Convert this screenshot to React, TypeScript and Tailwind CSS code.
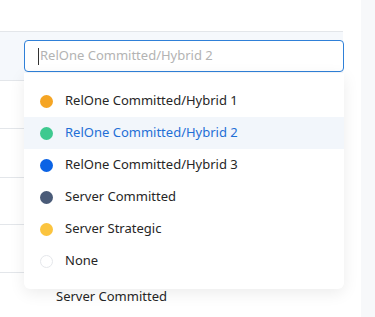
import React from 'react';

const options = [
  { label: 'RelOne Committed/Hybrid 1', color: 'bg-[#f5a524]' },
  { label: 'RelOne Committed/Hybrid 2', color: 'bg-[#3ec98f]', active: true },
  { label: 'RelOne Committed/Hybrid 3', color: 'bg-[#0b63e5]' },
  { label: 'Server Committed', color: 'bg-[#4a5b78]' },
  { label: 'Server Strategic', color: 'bg-[#fbc43f]' },
  { label: 'None', color: 'bg-white border border-[#e5e7eb]' },
];

export default function App() {
  return (
    <div className="relative flex h-[317px] w-[375px] overflow-hidden bg-white font-['Noto_Sans',sans-serif] text-[13px] text-[#262626]">
      {/* table */}
      <div className="w-[343px] pt-[31px]">
        <div className="border-t border-[#e3e6ea]">
          <div className="h-[49px] border-b border-[#e3e6ea] bg-[#f5f8fc]" />
          <div className="h-[48px] border-b border-[#e3e6ea]" />
          <div className="h-[49px] border-b border-[#e3e6ea]" />
          <div className="h-[47px] border-b border-[#e3e6ea]" />
          <div className="h-[48px] border-b border-[#e3e6ea]" />
          <div className="flex h-[48px] items-center pl-[56px]">Server Committed</div>
        </div>
      </div>
      <div className="w-[18px]" />
      <div className="flex-1 bg-[#f7f8fa]" />

      {/* editor input */}
      <div className="absolute left-[24px] top-[40px] flex h-[32px] w-[320px] items-center rounded-[4px] border border-[#2f80d8] bg-white pl-[13px]">
        <span className="mr-[1px] h-[17px] w-px bg-[#333]" />
        <span className="text-[#b3b3b3]">RelOne Committed/Hybrid 2</span>
      </div>

      {/* dropdown */}
      <div className="absolute left-[24px] top-[73px] w-[320px] rounded-b-[6px] bg-white py-[12px] shadow-[0_4px_16px_rgba(0,0,0,0.08)]">
        {options.map((o) => (
          <div
            key={o.label}
            className={`flex h-[32px] items-center gap-[12px] pl-[16px] ${o.active ? 'bg-[#f2f6fb] text-[#1f6fd6]' : ''}`}>
            <span className={`h-[13px] w-[13px] rounded-full ${o.color}`} />
            <span>{o.label}</span>
          </div>
        ))}
      </div>
    </div>
  );
}
